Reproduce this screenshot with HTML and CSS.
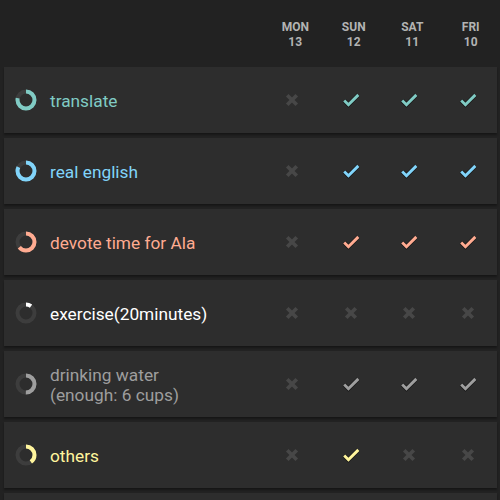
FILE: index.html
```html
<!DOCTYPE html>
<html lang="en">
<head>
    <meta charset="UTF-8">
    <meta name="viewport" content="width=device-width, initial-scale=1.0">
    <title>Habits</title>
    <link rel="stylesheet" href="styles.css">
</head>
<body>
    <div class="header">
        <div class="day"><span>MON</span><span>13</span></div>
        <div class="day"><span>SUN</span><span>12</span></div>
        <div class="day"><span>SAT</span><span>11</span></div>
        <div class="day"><span>FRI</span><span>10</span></div>
    </div>

    <div id="habitList" class="habit-list"></div>

    <script>
        const habits = [
            { name: "translate", color: "#80cbc4", score: 0.78, days: [0, 1, 1, 1] },
            { name: "real english", color: "#81d4fa", score: 0.82, days: [0, 1, 1, 1] },
            { name: "devote time for Ala", color: "#ffab91", score: 0.64, days: [0, 1, 1, 1] },
            { name: "exercise(20minutes)", color: "#ffffff", score: 0.1, days: [0, 0, 0, 0] },
            { name: "drinking water<br>(enough: 6 cups)", color: "#9e9e9e", score: 0.5, days: [0, 1, 1, 1] },
            { name: "others", color: "#fff59d", score: 0.4, days: [0, 1, 0, 0] },
            { name: "", color: "#9e9e9e", score: 0, days: [0, 0, 0, 0] }
        ];

        const circ = 2 * Math.PI * 8.5;

        function checkIcon(color) {
            return `<svg class="mark check" viewBox="0 0 24 24">
                <path class="outline" d="M4.6 12.6L9.2 17.2 20 6.4"/>
                <path stroke="${color}" d="M4.6 12.6L9.2 17.2 20 6.4"/>
            </svg>`;
        }

        function crossIcon() {
            return `<svg class="mark cross" viewBox="0 0 24 24"><path d="M6.8 6.8l10.4 10.4M17.2 6.8L6.8 17.2"/></svg>`;
        }

        function displayHabits() {
            const list = document.getElementById('habitList');
            habits.forEach(habit => {
                const row = document.createElement('div');
                row.className = 'habit';
                const dash = (habit.score * circ).toFixed(2);
                row.innerHTML = `
                    <svg class="ring" viewBox="0 0 24 24">
                        <circle class="track" cx="12" cy="12" r="8.5"/>
                        <circle class="progress" cx="12" cy="12" r="8.5" stroke="${habit.color}" style="stroke-dasharray: ${dash} ${circ.toFixed(2)}"/>
                    </svg>
                    <div class="name" style="color: ${habit.color}">${habit.name}</div>
                    <div class="checks">
                        ${habit.days.map(d => `<div class="cell">${d ? checkIcon(habit.color) : crossIcon()}</div>`).join('')}
                    </div>
                `;
                list.appendChild(row);
            });
        }

        displayHabits();
    </script>
</body>
</html>
```

FILE: styles.css
```css
html {
    overflow: hidden;
}
body {
    margin: 0;
    background-color: #222222;
    font-family: Roboto, "Noto Sans", Arial, sans-serif;
}
.header {
    height: 63px;
    display: flex;
    justify-content: flex-end;
    align-items: center;
    padding-top: 6px;
    box-sizing: border-box;
}
.day {
    width: 58.5px;
    display: flex;
    flex-direction: column;
    align-items: center;
    font-size: 12px;
    font-weight: bold;
    line-height: 15px;
    color: #b3b3b3;
}
.habit-list {
    padding: 4px 3px 0 4px;
}
.habit {
    height: 66px;
    margin-bottom: 5px;
    background-color: #2d2d2d;
    box-shadow: 0 2px 2px rgba(0, 0, 0, 0.35);
    display: flex;
    align-items: center;
}
.ring {
    width: 24px;
    height: 24px;
    margin-left: 9.5px;
    transform: rotate(-90deg);
    flex-shrink: 0;
}
.ring circle {
    fill: none;
    stroke-width: 4;
}
.ring .track {
    stroke: #3d3d3d;
}
.name {
    flex-grow: 1;
    margin-left: 12.5px;
    padding-top: 1px;
    font-size: 17.3px;
    line-height: 20px;
}
.checks {
    display: flex;
}
.cell {
    width: 58.5px;
    display: flex;
    justify-content: center;
    align-items: center;
}
.mark {
    width: 22px;
    height: 22px;
}
.check path {
    fill: none;
    stroke-width: 3.2;
    stroke-linecap: butt;
    stroke-linejoin: miter;
}
.check .outline {
    stroke: #151515;
    stroke-width: 4.6;
}
.cross path {
    fill: none;
    stroke: #474747;
    stroke-width: 4;
}
```
